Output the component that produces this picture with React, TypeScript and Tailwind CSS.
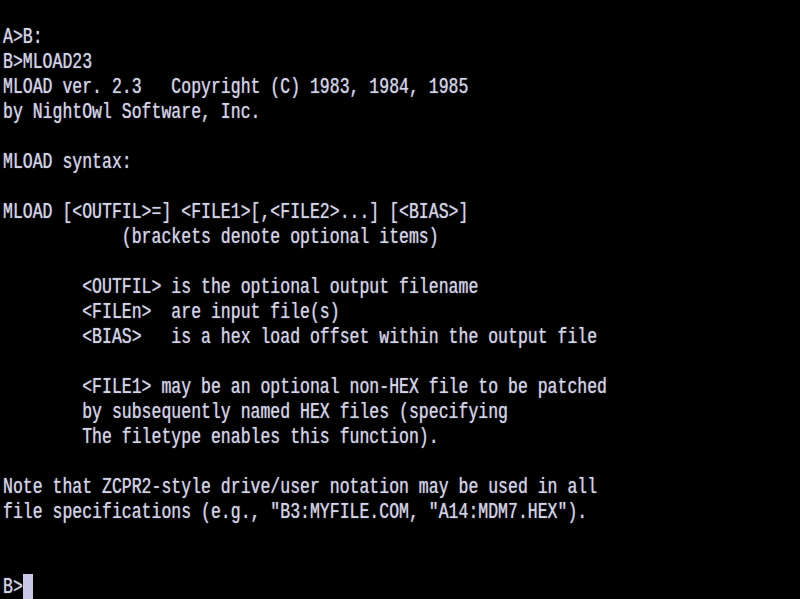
import React from "react";

const lines: string[] = [
  "",
  "A>B:",
  "B>MLOAD23",
  "MLOAD ver. 2.3   Copyright (C) 1983, 1984, 1985",
  "by NightOwl Software, Inc.",
  "",
  "MLOAD syntax:",
  "",
  "MLOAD [<OUTFIL>=] <FILE1>[,<FILE2>...] [<BIAS>]",
  "            (brackets denote optional items)",
  "",
  "        <OUTFIL> is the optional output filename",
  "        <FILEn>  are input file(s)",
  "        <BIAS>   is a hex load offset within the output file",
  "",
  "        <FILE1> may be an optional non-HEX file to be patched",
  "        by subsequently named HEX files (specifying",
  "        The filetype enables this function).",
  "",
  "Note that ZCPR2-style drive/user notation may be used in all",
  'file specifications (e.g., "B3:MYFILE.COM, "A14:MDM7.HEX").',
  "",
  "",
  "B>",
];

export default function App() {
  return (
    <div className="w-[800px] h-[599px] bg-black overflow-hidden pl-[3px] font-['Liberation_Mono','DejaVu_Sans_Mono',monospace] text-[16.5px] leading-[25px] text-[#d4d4e8] [text-shadow:0_0_1px_rgba(212,212,232,0.7)]">
      {lines.map((line, i) => (
        <div key={i} className="flex h-[25px] items-center">
          <span className="whitespace-pre scale-y-[1.38] inline-block -translate-y-[1px]">{line}</span>
          {i === lines.length - 1 && (
            <span className="inline-block w-[10px] h-[26px] bg-[#c8c8e6] mt-[-1px]" />
          )}
        </div>
      ))}
    </div>
  );
}
